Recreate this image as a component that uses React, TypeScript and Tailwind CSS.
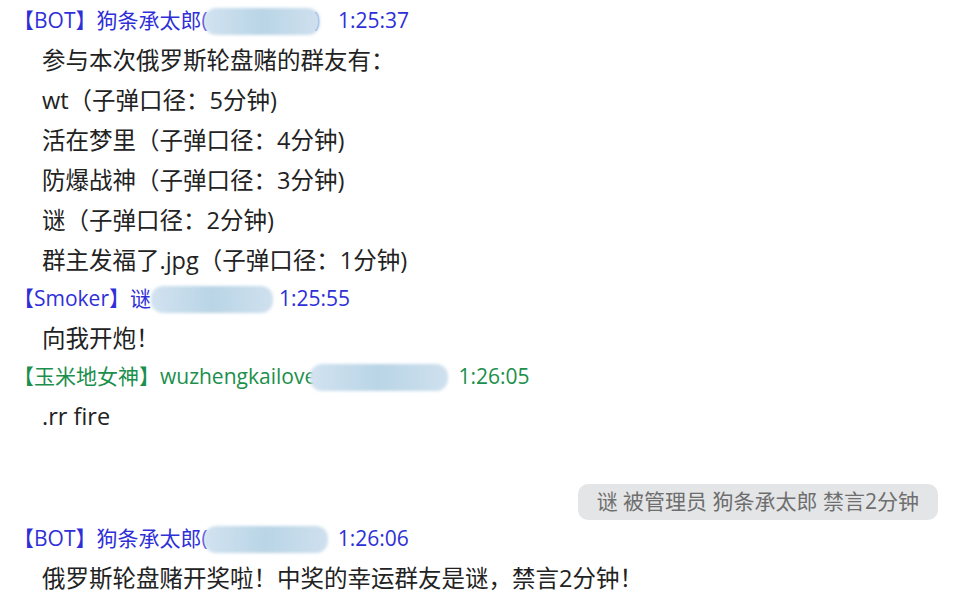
import React from 'react'

const FONT = { fontFamily: "'Open Sans', 'Noto Sans CJK SC', sans-serif" }

function Blur({ w, ml = 0 }: { w: number; ml?: number }) {
  return (
    <span
      className="inline-block h-[27px] rounded-[12px] bg-gradient-to-r from-[#d2e2f0] via-[#b9d5e6] to-[#cfe0ee] blur-[1.5px]"
      style={{ width: w, marginLeft: ml }}
    />
  )
}

function Header({
  tag,
  name,
  blur,
  blurMl,
  paren,
  time,
  green,
  gap,
}: {
  tag: string
  name: string
  blur: number
  blurMl?: number
  paren?: boolean
  time: string
  green?: boolean
  gap: number
}) {
  return (
    <div
      className={`h-[38px] flex items-center pl-[13px] text-[21px] ${
        green ? 'text-[#1b8f4c]' : 'text-[#2f2fd8]'
      }`}
    >
      <span>【{tag}】</span>
      <span>{name}</span>
      <Blur w={blur} ml={blurMl} />
      {paren && <span className="ml-[-6px]">)</span>}
      <span style={{ marginLeft: gap }}>{time}</span>
    </div>
  )
}

function Line({ children }: { children: React.ReactNode }) {
  return <div className="h-[40px] leading-[40px] pl-[42px] text-[23.5px] text-[#222]">{children}</div>
}

export default function App() {
  return (
    <div className="w-[959px] h-[601px] bg-white overflow-hidden pt-[2px]" style={FONT}>
      <Header tag="BOT" name="狗条承太郎(" blur={116} blurMl={-4} paren time="1:25:37" gap={18} />
      <Line>参与本次俄罗斯轮盘赌的群友有：</Line>
      <Line>wt（子弹口径：5分钟)</Line>
      <Line>活在梦里（子弹口径：4分钟)</Line>
      <Line>防爆战神（子弹口径：3分钟)</Line>
      <Line>谜（子弹口径：2分钟)</Line>
      <Line>群主发福了.jpg（子弹口径：1分钟)</Line>
      <Header tag="Smoker" name="谜" blur={122} time="1:25:55" gap={6} />
      <Line>向我开炮！</Line>
      <Header tag="玉米地女神" name="wuzhengkailove(" blur={138} blurMl={-12} time="1:26:05" gap={10} green />
      <Line>.rr fire</Line>
      <div className="flex justify-end pr-[21px] mt-[48px]">
        <div className="h-[36px] px-[19px] rounded-[10px] bg-[#e4e5e7] text-[#6e6e6e] text-[21px] flex items-center">
          谜 被管理员 狗条承太郎 禁言2分钟
        </div>
      </div>
      <Header tag="BOT" name="狗条承太郎(" blur={124} blurMl={-4} time="1:26:06" gap={10} />
      <Line>俄罗斯轮盘赌开奖啦！中奖的幸运群友是谜，禁言2分钟！</Line>
    </div>
  )
}
